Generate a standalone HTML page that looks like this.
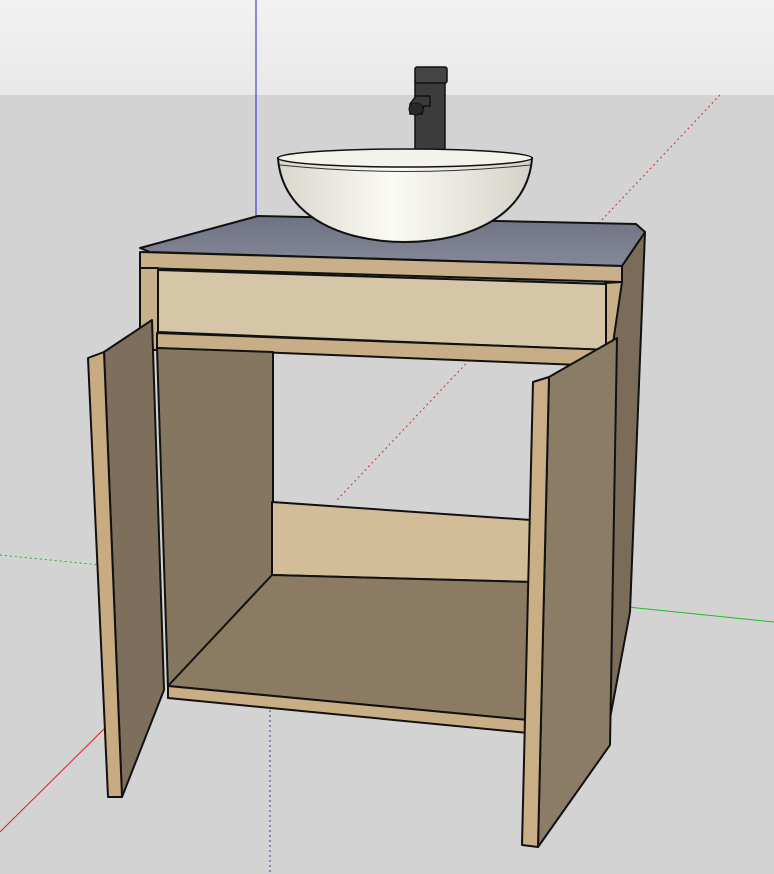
<!DOCTYPE html>
<html><head><style>html,body{margin:0;padding:0;width:774px;height:874px;overflow:hidden;background:#d3d3d3}</style></head>
<body>
<svg width="774" height="874" viewBox="0 0 774 874" xmlns="http://www.w3.org/2000/svg">
<defs>
<linearGradient id="sky" x1="0" y1="0" x2="0" y2="1"><stop offset="0" stop-color="#f2f2f2"/><stop offset="1" stop-color="#e8e8e8"/></linearGradient>
<linearGradient id="bowl" x1="0" y1="0" x2="1" y2="0"><stop offset="0" stop-color="#d8d6cc"/><stop offset="0.45" stop-color="#fbfaf5"/><stop offset="1" stop-color="#d4d2c8"/></linearGradient>
<linearGradient id="top" x1="0" y1="0" x2="0" y2="1"><stop offset="0" stop-color="#6f7283"/><stop offset="1" stop-color="#858899"/></linearGradient>
</defs>
<rect x="0" y="0" width="774" height="95" fill="url(#sky)"/>
<rect x="0" y="95" width="774" height="779" fill="#d3d3d3"/>
<line x1="256" y1="0" x2="256" y2="216" stroke="#2222cc" stroke-width="1"/>
<line x1="720" y1="95" x2="337" y2="500" stroke="#cc3333" stroke-width="1" stroke-dasharray="2,3"/>
<line x1="0" y1="555" x2="100" y2="565" stroke="#33aa33" stroke-width="1" stroke-dasharray="2,3"/>
<line x1="628" y1="607" x2="774" y2="622" stroke="#22bb22" stroke-width="1"/>
<line x1="0" y1="832" x2="107" y2="726" stroke="#dd2222" stroke-width="1"/>
<line x1="270" y1="700" x2="270" y2="874" stroke="#3333aa" stroke-width="1" stroke-dasharray="2,3"/>
<g stroke="#111" stroke-width="2" stroke-linejoin="round">
<polygon points="622,266 645,232 630,612 605,745 612,350" fill="#7a6c58"/>
<polygon points="258,216 636,224 645,232 622,266 150,252 140,248" fill="url(#top)"/>
<polygon points="140,252 622,266 622,282 140,268" fill="#c9b08a"/>
<polygon points="140,268 158,268 158,350 140,350" fill="#c9b08a"/>
<polygon points="605,283 622,282 612,350 605,350" fill="#c9b08a"/>
<polygon points="158,270 606,284 606,350 158,332" fill="#d6c6a8"/>
<polygon points="157,333 612,350 605,366 157,348" fill="#c8ae86"/>
<polygon points="157,348 273,352 273,575 168,688" fill="#857660"/>
<polygon points="272,502 531,520 531,582 272,575" fill="#d2bd98"/>
<polygon points="272,575 531,582 528,720 168,686" fill="#8b7b63"/>
<polygon points="168,686 528,720 528,733 168,698" fill="#c9ad84"/>
<polygon points="104,352 152,320 164,690 122,797" fill="#7d6f5b"/>
<polygon points="88,358 104,352 122,797 108,797" fill="#c8ab80"/>
<polygon points="549,377 617,338 610,745 538,847" fill="#8b7c66"/>
<polygon points="533,382 549,377 538,847 522,845" fill="#c9ae86"/>
</g>
<rect x="415" y="80" width="30" height="70" fill="#3c3c3c" stroke="#111" stroke-width="1.5"/>
<rect x="415" y="67" width="32" height="16" rx="2" fill="#444" stroke="#111" stroke-width="1.5"/>
<path d="M416,96 L430,96 L430,106 L424,106 L422,114 L410,114 L410,104 Z" fill="#3a3a3a" stroke="#111" stroke-width="1.5"/>
<ellipse cx="416" cy="109" rx="7" ry="6" fill="#2a2a2a" stroke="#111" stroke-width="1"/>
<path d="M278,158 C282,215 340,242 405,242 C470,242 528,215 532,158 Z" fill="url(#bowl)" stroke="#111" stroke-width="2"/>
<ellipse cx="405" cy="158" rx="127" ry="9" fill="#f4f2ec" stroke="#111" stroke-width="1.5"/>
<path d="M280,165 Q405,178 530,165" fill="none" stroke="#333" stroke-width="1"/>
</svg>
</body></html>
